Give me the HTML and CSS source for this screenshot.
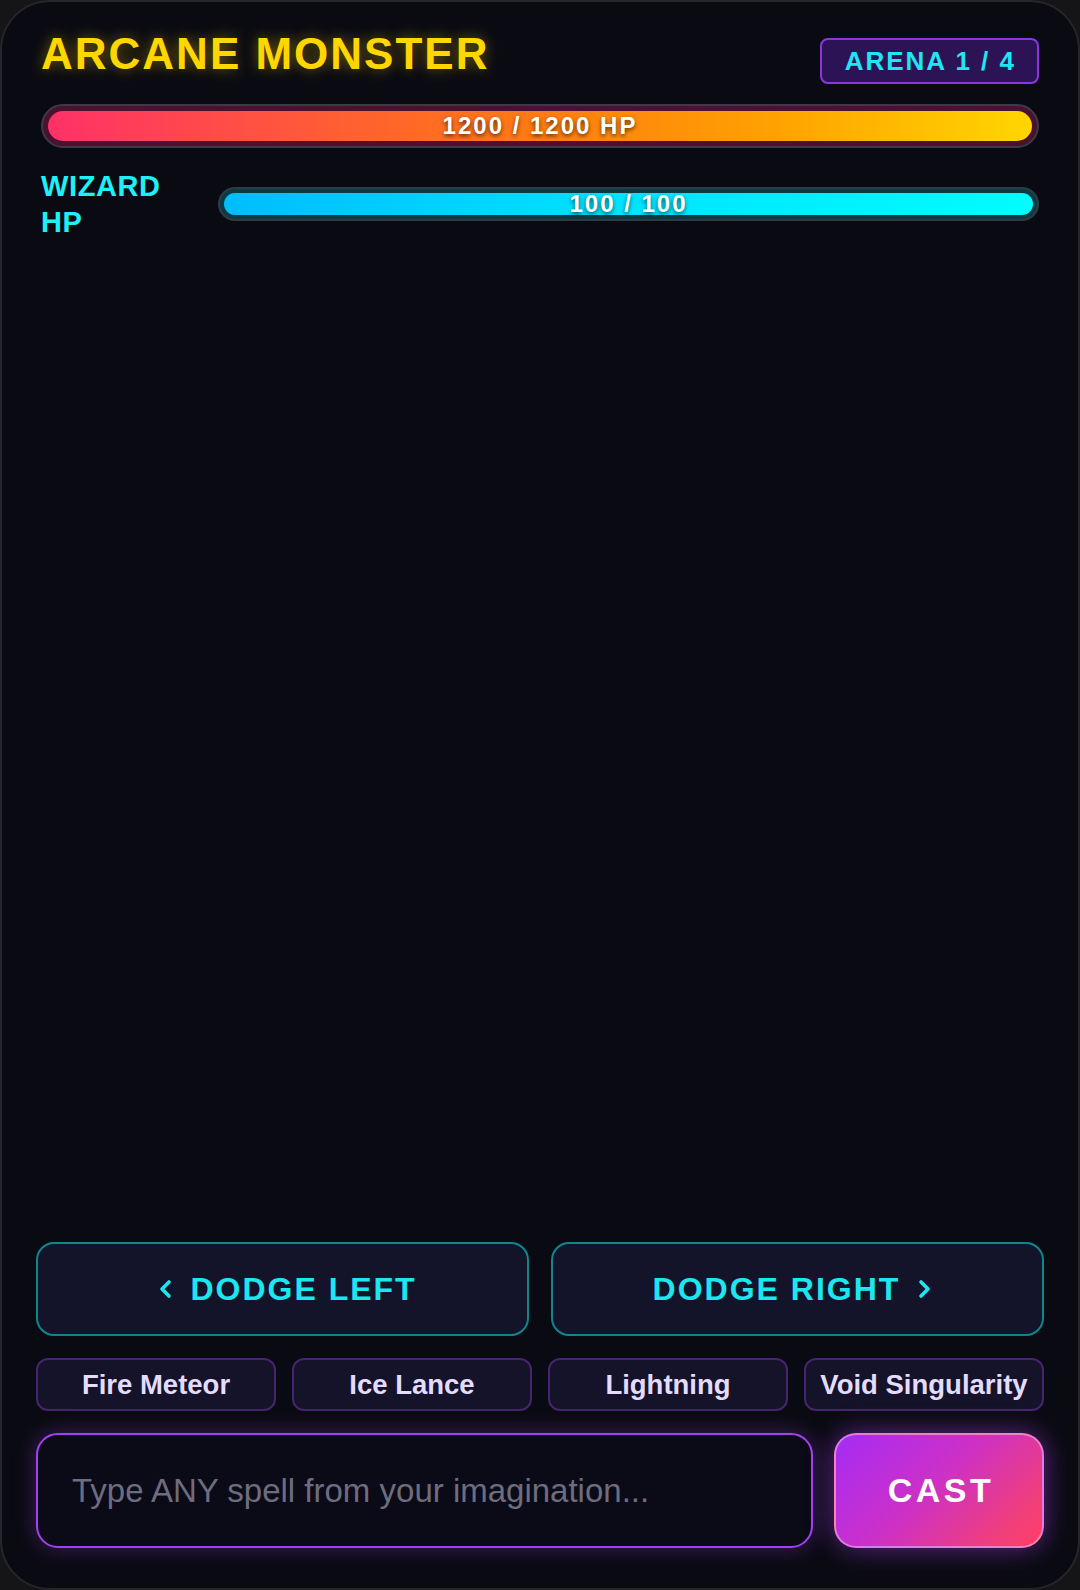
FILE: index.html
```html
<!DOCTYPE html>
<html lang="en">
<head>
<meta charset="utf-8">
<title>Arcane Monster</title>
<link rel="stylesheet" href="styles.css">
</head>
<body>
<div class="app">
  <div class="top">
    <header class="header">
      <h1 class="title">ARCANE MONSTER</h1>
      <div class="arena-badge">ARENA 1 / 4</div>
    </header>
    <div class="bar bar-boss">
      <div class="fill fill-boss" style="width:100%"></div>
      <span class="bar-text">1200 / 1200 HP</span>
    </div>
    <div class="wizard-row">
      <div class="wizard-label">WIZARD HP</div>
      <div class="bar bar-wizard">
        <div class="fill fill-wizard" style="width:100%"></div>
        <span class="bar-text">100 / 100</span>
      </div>
    </div>
  </div>

  <div class="arena"></div>

  <div class="controls">
    <div class="dodge-row">
      <button class="dodge">
        <svg class="chev" viewBox="0 0 32 20" width="32" height="20"><polyline points="21,3 14,10 21,17" fill="none" stroke="currentColor" stroke-width="3.6" stroke-linecap="round" stroke-linejoin="round"/></svg>
        <span>DODGE LEFT</span>
      </button>
      <button class="dodge">
        <span>DODGE RIGHT</span>
        <svg class="chev" viewBox="0 0 32 20" width="32" height="20"><polyline points="11,3 18,10 11,17" fill="none" stroke="currentColor" stroke-width="3.6" stroke-linecap="round" stroke-linejoin="round"/></svg>
      </button>
    </div>
    <div class="spells">
      <button class="chip">Fire Meteor</button>
      <button class="chip">Ice Lance</button>
      <button class="chip">Lightning</button>
      <button class="chip">Void Singularity</button>
    </div>
    <div class="cast-row">
      <input class="spell-input" type="text" placeholder="Type ANY spell from your imagination...">
      <button class="cast">CAST</button>
    </div>
  </div>
</div>
</body>
</html>
```

FILE: styles.css
```css
* { box-sizing: border-box; }

html, body {
  margin: 0;
  padding: 0;
  background: #151517;
  font-family: "Liberation Sans", Arial, sans-serif;
}

.app {
  width: 1080px;
  height: 1590px;
  border: 2px solid #26262a;
  border-radius: 50px;
  background: #0a0b12;
  display: flex;
  flex-direction: column;
  overflow: hidden;
}

.top {
  padding: 27px 39px 0 39px;
  display: flex;
  flex-direction: column;
  gap: 20px;
}

.header {
  display: flex;
  justify-content: space-between;
  align-items: flex-start;
}

.title {
  margin: 0;
  font-size: 44px;
  line-height: 50px;
  font-weight: 700;
  letter-spacing: 2px;
  color: #ffd700;
  text-shadow: 0 0 14px rgba(255, 200, 0, 0.45);
}

.arena-badge {
  margin-top: 9px;
  height: 46px;
  padding: 0 21px 0 23px;
  border: 2px solid #8c36e2;
  border-radius: 8px;
  background: #2b1356;
  color: #1fe6f2;
  font-size: 26px;
  font-weight: 700;
  letter-spacing: 2px;
  line-height: 42px;
}

.bar {
  display: grid;
  border-radius: 999px;
  border: 2px solid #3b3b46;
}

.bar > * { grid-area: 1 / 1; }

.bar-boss {
  height: 44px;
  padding: 5px;
  background: #4a1230;
}

.bar-wizard {
  flex: 1;
  height: 34px;
  padding: 4px;
  background: #0c3a42;
  border-color: #2e3c44;
}

.fill {
  height: 100%;
  border-radius: 999px;
}

.fill-boss {
  background: linear-gradient(90deg, #ff3168 0%, #ff5f32 30%, #ff7c12 50%, #ffa400 75%, #ffd600 100%);
}

.fill-wizard {
  background: linear-gradient(90deg, #00bdfd 0%, #00e4ff 50%, #00fdff 100%);
}

.bar-text {
  place-self: center;
  color: #fff;
  font-size: 24px;
  font-weight: 700;
  letter-spacing: 2px;
  line-height: 20px;
  text-shadow: 0 2px 4px rgba(0, 0, 0, 0.65);
}

.wizard-row {
  display: flex;
  align-items: center;
  gap: 17px;
}

.wizard-label {
  width: 160px;
  color: #1ef0f8;
  font-size: 29px;
  font-weight: 700;
  line-height: 36px;
  letter-spacing: 0.6px;
}

.arena {
  flex: 1;
}

.controls {
  padding: 0 34px 40px 34px;
  display: flex;
  flex-direction: column;
  gap: 22px;
}

.dodge-row {
  display: grid;
  grid-template-columns: 1fr 1fr;
  gap: 22px;
}

button {
  font-family: inherit;
  cursor: pointer;
}

.dodge {
  height: 94px;
  border: 2px solid #10868c;
  border-radius: 18px;
  background: #13132a;
  color: #1ce6ef;
  font-size: 32px;
  font-weight: 700;
  letter-spacing: 2px;
  display: flex;
  align-items: center;
  justify-content: center;
  gap: 10px;
}

.chev { display: block; }

.spells {
  display: grid;
  grid-template-columns: repeat(4, 1fr);
  gap: 16px;
}

.chip {
  height: 53px;
  padding: 0;
  border: 2px solid #45256f;
  border-radius: 12px;
  background: #15132a;
  color: #e4dcff;
  font-size: 27.5px;
  font-weight: 700;
  white-space: nowrap;
}

.cast-row {
  display: grid;
  grid-template-columns: 1fr 210px;
  gap: 21px;
}

.spell-input {
  height: 115px;
  border: 2px solid #a340f2;
  border-radius: 22px;
  background: #0b0a17;
  padding: 0 34px;
  font-family: "Liberation Sans", Arial, sans-serif;
  font-size: 33px;
  color: #e4dcff;
  outline: none;
  box-shadow: 0 0 22px rgba(160, 64, 240, 0.35);
}

.spell-input::placeholder {
  color: #6d6d7f;
}

.cast {
  height: 115px;
  border: 2px solid rgba(255, 190, 230, 0.55);
  border-radius: 22px;
  background: linear-gradient(135deg, #a52cf5 0%, #cc30c8 45%, #f23f78 85%, #ff3e66 100%);
  color: #fff;
  font-size: 34px;
  font-weight: 700;
  letter-spacing: 3.5px;
  padding: 0 0 0 4px;
  box-shadow: 0 0 26px rgba(170, 60, 240, 0.55);
}
```
